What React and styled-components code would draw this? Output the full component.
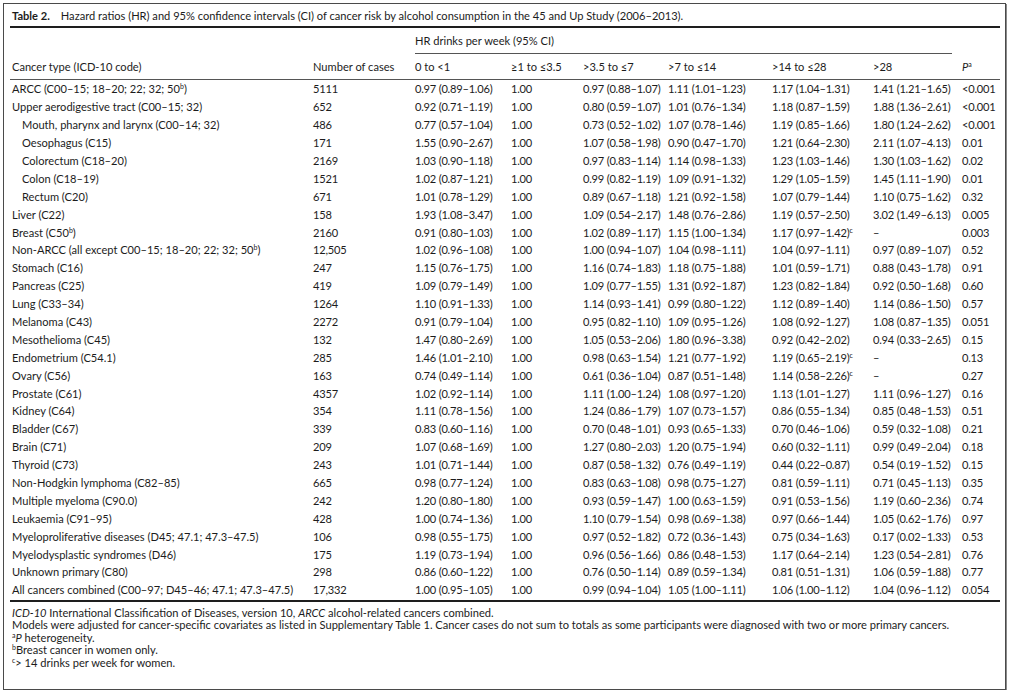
import styled, { createGlobalStyle } from "styled-components";

const GlobalStyle = createGlobalStyle`
  html, body { margin: 0; padding: 0; background: #fff; }
  body {
    font-family: Lato, "Open Sans", "Liberation Sans", sans-serif;
    color: #1c1c1c;
    -webkit-font-smoothing: antialiased;
  }
`;

const COLS = "301px 102px 96px 72px 85px 104px 101px 89px 1fr";

const rows = [
  { name: <>ARCC (C00–15; 18–20; 22; 32; 50<sup>b</sup>)</>, cases: "5111", v: ["0.97 (0.89–1.06)", "1.00", "0.97 (0.88–1.07)", "1.11 (1.01–1.23)", "1.17 (1.04–1.31)", "1.41 (1.21–1.65)"], p: "<0.001" },
  { name: "Upper aerodigestive tract (C00–15; 32)", cases: "652", v: ["0.92 (0.71–1.19)", "1.00", "0.80 (0.59–1.07)", "1.01 (0.76–1.34)", "1.18 (0.87–1.59)", "1.88 (1.36–2.61)"], p: "<0.001" },
  { name: "Mouth, pharynx and larynx (C00–14; 32)", sub: true, cases: "486", v: ["0.77 (0.57–1.04)", "1.00", "0.73 (0.52–1.02)", "1.07 (0.78–1.46)", "1.19 (0.85–1.66)", "1.80 (1.24–2.62)"], p: "<0.001" },
  { name: "Oesophagus (C15)", sub: true, cases: "171", v: ["1.55 (0.90–2.67)", "1.00", "1.07 (0.58–1.98)", "0.90 (0.47–1.70)", "1.21 (0.64–2.30)", "2.11 (1.07–4.13)"], p: "0.01" },
  { name: "Colorectum (C18–20)", sub: true, cases: "2169", v: ["1.03 (0.90–1.18)", "1.00", "0.97 (0.83–1.14)", "1.14 (0.98–1.33)", "1.23 (1.03–1.46)", "1.30 (1.03–1.62)"], p: "0.02" },
  { name: "Colon (C18–19)", sub: true, cases: "1521", v: ["1.02 (0.87–1.21)", "1.00", "0.99 (0.82–1.19)", "1.09 (0.91–1.32)", "1.29 (1.05–1.59)", "1.45 (1.11–1.90)"], p: "0.01" },
  { name: "Rectum (C20)", sub: true, cases: "671", v: ["1.01 (0.78–1.29)", "1.00", "0.89 (0.67–1.18)", "1.21 (0.92–1.58)", "1.07 (0.79–1.44)", "1.10 (0.75–1.62)"], p: "0.32" },
  { name: "Liver (C22)", cases: "158", v: ["1.93 (1.08–3.47)", "1.00", "1.09 (0.54–2.17)", "1.48 (0.76–2.86)", "1.19 (0.57–2.50)", "3.02 (1.49–6.13)"], p: "0.005" },
  { name: <>Breast (C50<sup>b</sup>)</>, cases: "2160", v: ["0.91 (0.80–1.03)", "1.00", "1.02 (0.89–1.17)", "1.15 (1.00–1.34)", <>1.17 (0.97–1.42)<sup>c</sup></>, "–"], p: "0.003" },
  { name: <>Non-ARCC (all except C00–15; 18–20; 22; 32; 50<sup>b</sup>)</>, cases: "12,505", v: ["1.02 (0.96–1.08)", "1.00", "1.00 (0.94–1.07)", "1.04 (0.98–1.11)", "1.04 (0.97–1.11)", "0.97 (0.89–1.07)"], p: "0.52" },
  { name: "Stomach (C16)", cases: "247", v: ["1.15 (0.76–1.75)", "1.00", "1.16 (0.74–1.83)", "1.18 (0.75–1.88)", "1.01 (0.59–1.71)", "0.88 (0.43–1.78)"], p: "0.91" },
  { name: "Pancreas (C25)", cases: "419", v: ["1.09 (0.79–1.49)", "1.00", "1.09 (0.77–1.55)", "1.31 (0.92–1.87)", "1.23 (0.82–1.84)", "0.92 (0.50–1.68)"], p: "0.60" },
  { name: "Lung (C33–34)", cases: "1264", v: ["1.10 (0.91–1.33)", "1.00", "1.14 (0.93–1.41)", "0.99 (0.80–1.22)", "1.12 (0.89–1.40)", "1.14 (0.86–1.50)"], p: "0.57" },
  { name: "Melanoma (C43)", cases: "2272", v: ["0.91 (0.79–1.04)", "1.00", "0.95 (0.82–1.10)", "1.09 (0.95–1.26)", "1.08 (0.92–1.27)", "1.08 (0.87–1.35)"], p: "0.051" },
  { name: "Mesothelioma (C45)", cases: "132", v: ["1.47 (0.80–2.69)", "1.00", "1.05 (0.53–2.06)", "1.80 (0.96–3.38)", "0.92 (0.42–2.02)", "0.94 (0.33–2.65)"], p: "0.15" },
  { name: "Endometrium (C54.1)", cases: "285", v: ["1.46 (1.01–2.10)", "1.00", "0.98 (0.63–1.54)", "1.21 (0.77–1.92)", <>1.19 (0.65–2.19)<sup>c</sup></>, "–"], p: "0.13" },
  { name: "Ovary (C56)", cases: "163", v: ["0.74 (0.49–1.14)", "1.00", "0.61 (0.36–1.04)", "0.87 (0.51–1.48)", <>1.14 (0.58–2.26)<sup>c</sup></>, "–"], p: "0.27" },
  { name: "Prostate (C61)", cases: "4357", v: ["1.02 (0.92–1.14)", "1.00", "1.11 (1.00–1.24)", "1.08 (0.97–1.20)", "1.13 (1.01–1.27)", "1.11 (0.96–1.27)"], p: "0.16" },
  { name: "Kidney (C64)", cases: "354", v: ["1.11 (0.78–1.56)", "1.00", "1.24 (0.86–1.79)", "1.07 (0.73–1.57)", "0.86 (0.55–1.34)", "0.85 (0.48–1.53)"], p: "0.51" },
  { name: "Bladder (C67)", cases: "339", v: ["0.83 (0.60–1.16)", "1.00", "0.70 (0.48–1.01)", "0.93 (0.65–1.33)", "0.70 (0.46–1.06)", "0.59 (0.32–1.08)"], p: "0.21" },
  { name: "Brain (C71)", cases: "209", v: ["1.07 (0.68–1.69)", "1.00", "1.27 (0.80–2.03)", "1.20 (0.75–1.94)", "0.60 (0.32–1.11)", "0.99 (0.49–2.04)"], p: "0.18" },
  { name: "Thyroid (C73)", cases: "243", v: ["1.01 (0.71–1.44)", "1.00", "0.87 (0.58–1.32)", "0.76 (0.49–1.19)", "0.44 (0.22–0.87)", "0.54 (0.19–1.52)"], p: "0.15" },
  { name: "Non-Hodgkin lymphoma (C82–85)", cases: "665", v: ["0.98 (0.77–1.24)", "1.00", "0.83 (0.63–1.08)", "0.98 (0.75–1.27)", "0.81 (0.59–1.11)", "0.71 (0.45–1.13)"], p: "0.35" },
  { name: "Multiple myeloma (C90.0)", cases: "242", v: ["1.20 (0.80–1.80)", "1.00", "0.93 (0.59–1.47)", "1.00 (0.63–1.59)", "0.91 (0.53–1.56)", "1.19 (0.60–2.36)"], p: "0.74" },
  { name: "Leukaemia (C91–95)", cases: "428", v: ["1.00 (0.74–1.36)", "1.00", "1.10 (0.79–1.54)", "0.98 (0.69–1.38)", "0.97 (0.66–1.44)", "1.05 (0.62–1.76)"], p: "0.97" },
  { name: "Myeloproliferative diseases (D45; 47.1; 47.3–47.5)", cases: "106", v: ["0.98 (0.55–1.75)", "1.00", "0.97 (0.52–1.82)", "0.72 (0.36–1.43)", "0.75 (0.34–1.63)", "0.17 (0.02–1.33)"], p: "0.53" },
  { name: "Myelodysplastic syndromes (D46)", cases: "175", v: ["1.19 (0.73–1.94)", "1.00", "0.96 (0.56–1.66)", "0.86 (0.48–1.53)", "1.17 (0.64–2.14)", "1.23 (0.54–2.81)"], p: "0.76" },
  { name: "Unknown primary (C80)", cases: "298", v: ["0.86 (0.60–1.22)", "1.00", "0.76 (0.50–1.14)", "0.89 (0.59–1.34)", "0.81 (0.51–1.31)", "1.06 (0.59–1.88)"], p: "0.77" },
  { name: "All cancers combined (C00–97; D45–46; 47.1; 47.3–47.5)", cases: "17,332", v: ["1.00 (0.95–1.05)", "1.00", "0.99 (0.94–1.04)", "1.05 (1.00–1.11)", "1.06 (1.00–1.12)", "1.04 (0.96–1.12)"], p: "0.054" },
];

const Frame = styled.div`
  box-sizing: border-box;
  width: 1003px;
  height: 687px;
  margin: 3px 0 0 3px;
  border: 1px solid #4a4a4a;
  box-shadow: 1px 1px 0 #8a8a8a;
  padding: 0 5px 0 6px;
  font-size: 11.1px;
  display: flex;
  flex-direction: column;
  sup {
    font-size: 7px;
    line-height: 0;
    vertical-align: 4px;
  }
`;

const Caption = styled.div`
  height: 22px;
  display: flex;
  align-items: center;
  padding-left: 2px;
  border-bottom: 2px solid #1e1e1e;
  white-space: nowrap;
`;

const CaptionLabel = styled.b`
  font-weight: 700;
  margin-right: 11px;
`;

const Grid = styled.div`
  display: grid;
  grid-template-columns: ${COLS};
  height: ${(p) => p.$h}px;
  align-items: center;
  border-bottom: ${(p) => (p.$rule ? "1px solid #555" : "none")};
  box-sizing: border-box;
`;

const Cell = styled.div`
  padding-left: ${(p) => (p.$sub ? 12 : 2)}px;
  white-space: nowrap;
`;

const NumCell = styled(Cell)`
  font-variant-numeric: tabular-nums;
  letter-spacing: -0.22px;
`;

const SpanCell = styled.div`
  grid-column: 3 / 9;
  align-self: stretch;
  display: flex;
  align-items: center;
  margin: 0 8px 0 2px;
  border-bottom: 1px solid #555;
`;

const Body = styled.div`
  border-bottom: 2px solid #1e1e1e;
  padding-bottom: 1px;
`;

const Notes = styled.div`
  padding: 5px 0 0 2px;
  line-height: 12.5px;
`;

const Note = styled.div`
  white-space: nowrap;
`;

function App() {
  return (
    <>
      <GlobalStyle />
      <Frame>
        <Caption>
          <CaptionLabel>Table 2.</CaptionLabel>
          Hazard ratios (HR) and 95% confidence intervals (CI) of cancer risk by alcohol consumption in the 45 and Up Study (2006–2013).
        </Caption>
        <Grid $h={26}>
          <SpanCell>HR drinks per week (95% CI)</SpanCell>
        </Grid>
        <Grid $h={26} $rule>
          <Cell>Cancer type (ICD-10 code)</Cell>
          <Cell>Number of cases</Cell>
          <Cell>0 to &lt;1</Cell>
          <Cell>≥1 to ≤3.5</Cell>
          <Cell>&gt;3.5 to ≤7</Cell>
          <Cell>&gt;7 to ≤14</Cell>
          <Cell>&gt;14 to ≤28</Cell>
          <Cell>&gt;28</Cell>
          <Cell><i>P</i><sup>a</sup></Cell>
        </Grid>
        <Body>
          {rows.map((r, i) => (
            <Grid key={i} $h={17.9}>
              <Cell $sub={r.sub}>{r.name}</Cell>
              <NumCell>{r.cases}</NumCell>
              {r.v.map((x, j) => (
                <NumCell key={j}>{x}</NumCell>
              ))}
              <NumCell>{r.p}</NumCell>
            </Grid>
          ))}
        </Body>
        <Notes>
          <Note><i>ICD-10</i> International Classification of Diseases, version 10, <i>ARCC</i> alcohol-related cancers combined.</Note>
          <Note>Models were adjusted for cancer-specific covariates as listed in Supplementary Table 1. Cancer cases do not sum to totals as some participants were diagnosed with two or more primary cancers.</Note>
          <Note><sup>a</sup><i>P</i> heterogeneity.</Note>
          <Note><sup>b</sup>Breast cancer in women only.</Note>
          <Note><sup>c</sup>&gt; 14 drinks per week for women.</Note>
        </Notes>
      </Frame>
    </>
  );
}

export default App;
